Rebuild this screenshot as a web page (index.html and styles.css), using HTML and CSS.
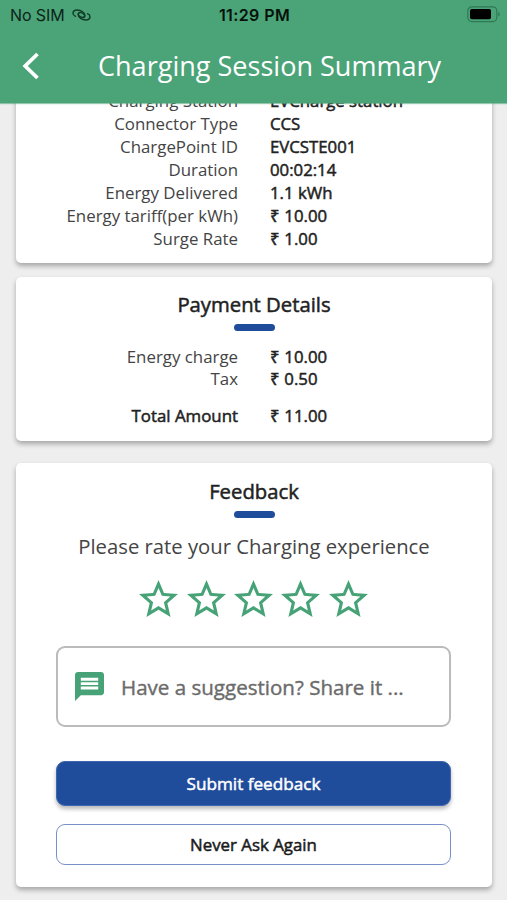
FILE: index.html
```html
<!DOCTYPE html>
<html lang="en">
<head>
<meta charset="utf-8">
<title>Charging Session Summary</title>
<link rel="stylesheet" href="styles.css">
</head>
<body>
<header class="header">
  <div class="status">
    <div class="carrier"><span>No SIM</span>
      <svg class="link-icon" width="19" height="12" viewBox="0 0 19 12" fill="none" stroke="#123d29" stroke-width="1.4" stroke-linecap="round">
        <path d="M3.500 7.300C-.5 5.500 .5 1 5 1C9 1 13.300 4 12.800 7C12.400 9 8.500 8.800 6.800 6.500C5.900 5.200 6.300 4 7.300 3.600"/>
        <path d="M15.500 4.700C19.500 6.500 18.500 11 14 11C10 11 5.700 8 6.200 5C6.600 3 10.500 3.200 12.200 5.500C13.100 6.800 12.700 8 11.700 8.400"/>
      </svg>
    </div>
    <div class="clock">11:29 PM</div>
    <svg class="battery" width="33" height="17" viewBox="0 0 33 17">
      <rect x=".8" y=".8" width="29" height="14.800" rx="4" fill="none" stroke="#2e7a55" stroke-width="1.200"/>
      <rect x="3" y="3" width="21" height="10.300" rx="1.800" fill="#000"/>
      <path d="M31.200 6v4.500q1.500-.6 1.500-2.250t-1.500-2.250" fill="#2e7a55"/>
    </svg>
  </div>
  <div class="titlebar">
    <svg class="back" width="18" height="28" viewBox="0 0 18 28"><path d="M16.500 2 4.200 14 16.500 26" fill="none" stroke="#fff" stroke-width="3.800"/></svg>
    <h1 class="title">Charging Session Summary</h1>
  </div>
</header>
<main class="content">
  <section class="card session">
    <dl class="rows">
      <dt>Charging Station</dt><dd>EVCharge station</dd>
      <dt>Connector Type</dt><dd>CCS</dd>
      <dt>ChargePoint ID</dt><dd>EVCSTE001</dd>
      <dt>Duration</dt><dd>00:02:14</dd>
      <dt>Energy Delivered</dt><dd>1.1 kWh</dd>
      <dt>Energy tariff(per kWh)</dt><dd>₹ 10.00</dd>
      <dt>Surge Rate</dt><dd>₹ 1.00</dd>
    </dl>
  </section>
  <section class="card payment">
    <h2 class="heading">Payment Details</h2>
    <div class="accent"></div>
    <dl class="rows charges">
      <dt>Energy charge</dt><dd>₹ 10.00</dd>
      <dt>Tax</dt><dd>₹ 0.50</dd>
    </dl>
    <dl class="rows total">
      <dt>Total Amount</dt><dd>₹ 11.00</dd>
    </dl>
  </section>
  <section class="card feedback">
    <h2 class="heading">Feedback</h2>
    <div class="accent"></div>
    <p class="prompt">Please rate your Charging experience</p>
    <div class="stars">
      <svg class="star" viewBox="2 2 20 19"><path d="m22 9.240-7.190-.62L12 2 9.190 8.630 2 9.240l5.460 4.730L5.820 21 12 17.270 18.180 21l-1.630-7.030zM12 15.400l-3.760 2.270 1-4.280-3.320-2.880 4.380-.38L12 6.100l1.710 4.040 4.380.38-3.320 2.880 1 4.280z"/></svg>
      <svg class="star" viewBox="2 2 20 19"><path d="m22 9.240-7.190-.62L12 2 9.190 8.630 2 9.240l5.460 4.730L5.820 21 12 17.270 18.180 21l-1.630-7.030zM12 15.400l-3.760 2.270 1-4.280-3.320-2.880 4.380-.38L12 6.100l1.710 4.040 4.380.38-3.320 2.880 1 4.280z"/></svg>
      <svg class="star" viewBox="2 2 20 19"><path d="m22 9.240-7.190-.62L12 2 9.190 8.630 2 9.240l5.460 4.730L5.820 21 12 17.270 18.180 21l-1.630-7.030zM12 15.400l-3.760 2.270 1-4.280-3.320-2.880 4.380-.38L12 6.100l1.710 4.040 4.380.38-3.320 2.880 1 4.280z"/></svg>
      <svg class="star" viewBox="2 2 20 19"><path d="m22 9.240-7.190-.62L12 2 9.190 8.630 2 9.240l5.460 4.730L5.820 21 12 17.270 18.180 21l-1.630-7.030zM12 15.400l-3.760 2.270 1-4.280-3.320-2.880 4.380-.38L12 6.100l1.710 4.040 4.380.38-3.320 2.880 1 4.280z"/></svg>
      <svg class="star" viewBox="2 2 20 19"><path d="m22 9.240-7.190-.62L12 2 9.190 8.630 2 9.240l5.460 4.730L5.820 21 12 17.270 18.180 21l-1.630-7.030zM12 15.400l-3.760 2.270 1-4.280-3.320-2.880 4.380-.38L12 6.100l1.710 4.040 4.380.38-3.320 2.880 1 4.280z"/></svg>
    </div>
    <div class="suggestion">
      <svg class="chat" width="29" height="29" viewBox="2 2 20 20"><path fill="#47a377" d="M20 2H4c-1.100 0-1.990.9-1.990 2L2 22l4-4h14c1.100 0 2-.9 2-2V4c0-1.100-.9-2-2-2zM6 9h12v2H6V9zm12 5H6v-2h12v2zm0-6H6V6h12v2z"/></svg>
      <span>Have a suggestion? Share it ...</span>
    </div>
    <button class="btn submit">Submit feedback</button>
    <button class="btn never">Never Ask Again</button>
  </section>
</main>
</body>
</html>
```
FILE: styles.css
```css
* { box-sizing: border-box; }
body {
  margin: 0;
  height: 900px;
  overflow: hidden;
  display: flex;
  flex-direction: column;
  background: #eee;
  color: #1f1f1f;
  font-family: "Open Sans", sans-serif;
}
h1, h2, p, dl, dd { margin: 0; font-weight: 400; }
.header {
  flex: none;
  height: 103px;
  background: #4ba378;
  position: relative;
  z-index: 1;
  box-shadow: 0 1px 1px rgba(75, 163, 120, .6);
}
.status {
  height: 30px;
  padding: 0 7px 0 10px;
  display: grid;
  grid-template-columns: 1fr auto 1fr;
  align-items: center;
  font-family: Inter, sans-serif;
  font-size: 16px;
  color: #0b2418;
}
.carrier { display: flex; align-items: center; gap: 7px; letter-spacing: -.1px; }
.clock { font-weight: 600; letter-spacing: .4px; margin-right: 1px; color: #04120b; }
.battery { justify-self: end; margin-top: -2px; }
.titlebar {
  height: 73px;
  padding-left: 21px;
  display: flex;
  align-items: center;
}
.back { flex: none; margin-top: -2px; }
.title {
  margin-left: 59px;
  margin-top: -1px;
  font-size: 27.050px;
  line-height: 36px;
  color: #fff;
  white-space: nowrap;
}
.content {
  flex: 1;
  min-height: 0;
  padding: 0 15px 0 16px;
  overflow: hidden;
}
.card {
  background: #fff;
  border-radius: 5px;
  box-shadow: 0 3px 5px rgba(0, 0, 0, .3);
}
.session { height: 200px; margin-top: -40px; padding-top: 27.200px; }
.payment { height: 163.500px; margin-top: 14px; padding-top: 13px; }
.feedback { height: 424px; margin-top: 22.500px; padding: 14px 41px 0; }
.rows {
  display: grid;
  grid-template-columns: 222px 1fr;
  column-gap: 32px;
  font-size: 16.850px;
  line-height: 22.950px;
  white-space: nowrap;
}
.rows dt { text-align: right; color: #444; }
.rows dd, .total dt, .heading { color: #222; -webkit-text-stroke: .5px; }
.rows dd { font-size: 16.750px; }
.heading { font-size: 20.300px; line-height: 28px; text-align: center; }
.accent {
  width: 41px;
  height: 7px;
  margin: 6px auto 0;
  border-radius: 3.5px;
  background: #204c9c;
}
.charges { margin-top: 14.500px; }
.total { margin-top: 13.500px; }
.total dt { color: #222; }
.prompt {
  margin-top: 14px;
  font-size: 20.250px;
  line-height: 28px;
  text-align: center;
  white-space: nowrap;
  color: #444;
}
.stars { display: flex; justify-content: center; gap: 8.300px; margin: 20px 0 0 -1px; }
.star { width: 39px; height: 37px; fill: #47a377; }
.suggestion {
  height: 81px;
  margin: 29px 0 0 -1px;
  padding-left: 17px;
  display: flex;
  align-items: center;
  gap: 17px;
  border: 2px solid #bbb;
  border-radius: 9px;
  font-size: 20.550px;
  white-space: nowrap;
  color: #6b6b6b;
  -webkit-text-stroke: .4px;
}
.suggestion span { margin-top: 1px; }
.chat { flex: none; margin-top: -1px; }
.btn {
  display: block;
  width: calc(100% + 1px);
  margin-left: -1px;
  padding: 0;
  border-radius: 9px;
  font: 16.850px "Open Sans", sans-serif;
  -webkit-text-stroke: .5px;
}
.submit {
  height: 45px;
  margin-top: 34px;
  border: 1px solid #3f66b2;
  background: #204c9c;
  color: #fff;
  font-size: 17.150px;
  box-shadow: 0 3px 4px rgba(0, 0, 0, .28);
}
.never {
  height: 41px;
  margin-top: 18px;
  border: 1.500px solid #7890c8;
  background: #fff;
  color: #1a1a1a;
}
```
